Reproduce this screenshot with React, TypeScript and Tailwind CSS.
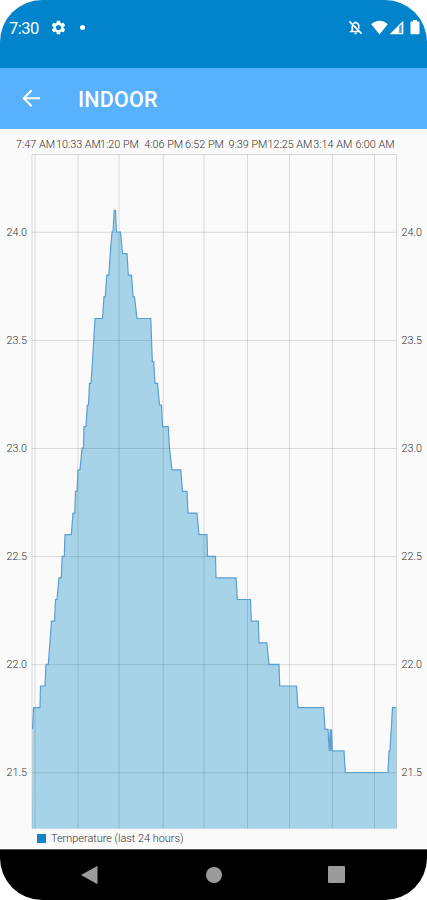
const PLOT = { left: 32, right: 396.5, top: 26.5, bottom: 700.7 };

const timeTicks = [
  { x: 35, label: '7:47 AM' },
  { x: 78, label: '10:33 AM' },
  { x: 119, label: '1:20 PM' },
  { x: 163.2, label: '4:06 PM' },
  { x: 204, label: '6:52 PM' },
  { x: 247.5, label: '9:39 PM' },
  { x: 289.5, label: '12:25 AM' },
  { x: 332.3, label: '3:14 AM' },
  { x: 374.5, label: '6:00 AM' },
];

const tempTicks = [24, 23.5, 23, 22.5, 22, 21.5];

// [x, temperature]
const readings: [number, number][] = [
  [32.5, 21.7], [33.5, 21.8], [40, 21.8], [40.5, 21.9], [45, 21.9], [46, 22], [48.3, 22],
  [51.5, 22.2], [54.5, 22.2], [55.5, 22.3], [57, 22.3], [59, 22.4], [61.3, 22.4],
  [62.2, 22.5], [64.3, 22.5], [65, 22.6], [71.3, 22.6], [73, 22.7], [74.8, 22.7],
  [75.5, 22.8], [77, 22.8], [78, 22.9], [80, 22.9], [82, 23], [83.5, 23],
  [84, 23.1], [86, 23.1], [87.3, 23.2], [88.5, 23.2], [89.5, 23.3], [91, 23.3],
  [92.5, 23.4], [95, 23.6], [102.5, 23.6], [104, 23.7], [105.3, 23.7], [106.8, 23.8],
  [108.8, 23.8], [110.3, 23.9], [112, 24], [113, 24], [114.2, 24.1], [115.5, 24.1],
  [116.5, 24], [120.5, 24], [122.5, 23.9], [127, 23.9], [128.3, 23.8], [131.5, 23.8],
  [133, 23.7], [134.5, 23.7], [137, 23.6], [150.8, 23.6], [152.3, 23.4], [153.7, 23.4],
  [155, 23.3], [157.5, 23.3], [159.5, 23.2], [161.5, 23.2], [162.5, 23.1], [168.3, 23.1],
  [169.5, 23], [172, 22.9], [180.8, 22.9], [182.5, 22.8], [187, 22.8], [188, 22.7],
  [197, 22.7], [199, 22.6], [207, 22.6], [207.5, 22.5], [215.5, 22.5], [216, 22.4],
  [236, 22.4], [237.3, 22.3], [250.5, 22.3], [251.3, 22.2], [258.3, 22.2], [259, 22.1],
  [266.8, 22.1], [269, 22], [279, 22], [279.7, 21.9], [296.5, 21.9], [298, 21.8],
  [323.7, 21.8], [325, 21.7], [328, 21.7], [329.3, 21.6], [330.2, 21.7], [330.8, 21.6],
  [331.5, 21.7], [332.3, 21.6], [344, 21.6], [345.3, 21.5], [388, 21.5], [389, 21.6],
  [390, 21.6], [392.5, 21.8], [396, 21.8],
];

const tempToY = (t: number) => 104 + (24 - t) * 216.2;

const line = readings.map(([x, t]) => `${x},${tempToY(t).toFixed(1)}`).join(' ');
const area = `${PLOT.left},${PLOT.bottom} ${line} ${PLOT.right},${tempToY(21.8)} ${PLOT.right},${PLOT.bottom}`;

function StatusBar() {
  return (
    <div className="flex h-[68px] items-start bg-[#0284cd] pt-[18px] text-white">
      <span className="ml-[9px] w-[31px] pt-px text-[16.5px] leading-5 tracking-[-0.5px]">7:30</span>
      <svg className="ml-[10px] mt-px h-[17px] w-[17px]" viewBox="0 0 24 24" fill="currentColor">
        <path d="M19.14 12.94c.04-.3.06-.61.06-.94 0-.32-.02-.64-.07-.94l2.03-1.58a.49.49 0 0 0 .12-.61l-1.92-3.32a.49.49 0 0 0-.59-.22l-2.39.96c-.5-.38-1.03-.7-1.62-.94l-.36-2.54a.48.48 0 0 0-.48-.41h-3.84a.47.47 0 0 0-.47.41l-.36 2.54c-.59.24-1.13.57-1.62.94l-2.39-.96a.48.48 0 0 0-.59.22L2.74 8.87c-.12.21-.08.47.12.61l2.03 1.58c-.05.3-.09.63-.09.94s.02.64.07.94l-2.03 1.58a.49.49 0 0 0-.12.61l1.92 3.32c.12.22.37.29.59.22l2.39-.96c.5.38 1.03.7 1.62.94l.36 2.54c.05.24.24.41.48.41h3.84c.24 0 .44-.17.47-.41l.36-2.54c.59-.24 1.13-.56 1.62-.94l2.39.96c.22.08.47 0 .59-.22l1.92-3.32a.48.48 0 0 0-.12-.61zM12 15.6a3.6 3.6 0 1 1 0-7.2 3.6 3.6 0 0 1 0 7.2z" />
      </svg>
      <span className="ml-[13px] mt-[7px] h-[5px] w-[5px] rounded-full bg-white" />

      {/* Muted bell */}
      <svg className="ml-auto mt-[2px] h-[15px] w-[15px]" viewBox="0 0 16 16" fill="none" stroke="currentColor" strokeWidth="1.7">
        <path d="M1.500 1.500l13 13M5.600 3.900C6.200 3.300 7 3 8 3c2.300 0 3.500 1.700 3.500 4v2.300M4.500 6v5L3.300 12.300h8.400M8 3V1.500" />
        <path d="M7 14.200h2.200" strokeWidth="1.800" />
      </svg>
      {/* Wifi */}
      <svg className="ml-[8px] mt-[2px] h-[15px] w-[17px]" viewBox="0 0 17 15" fill="currentColor">
        <path d="M8.500 14.500L.3 4.200C2.600 2 5.300.7 8.500.7s5.900 1.300 8.200 3.500z" />
      </svg>
      {/* Signal */}
      <svg className="ml-px mt-[2px] h-[15px] w-[15px]" viewBox="0 0 15 15">
        <path d="M14.300 .700v13.600H.700z" fill="#fff" />
        <path d="M10.200 6.400l2.600-2.600V12.900h-2.600z" fill="#0284cd" fillOpacity="0.75" />
      </svg>
      {/* Battery */}
      <svg className="ml-[6px] mr-[7px] mt-[2px] h-[15px] w-[10px]" viewBox="0 0 10 15" fill="currentColor">
        <path d="M3 0h4v1.500h1.700c.5 0 .8.300.8.800v11c0 .5-.3.900-.8.900H1.300c-.5 0-.8-.4-.8-.9v-11c0-.5.300-.8.800-.8H3z" />
      </svg>
    </div>
  );
}

function AppBar() {
  return (
    <header className="flex h-[61px] items-center bg-[#58b1fb] text-white">
      <button className="ml-[22px] h-[19px] w-[19px]" aria-label="Back">
        <svg className="h-full w-full" viewBox="0 0 19 19" fill="none" stroke="currentColor" strokeWidth="2">
          <path d="M18 9.200H2M9.700 1.200L1.700 9.200l8 8" />
        </svg>
      </button>
      <h1 className="ml-[37px] pt-[2px] text-[21.5px] font-medium leading-6 tracking-[0.2px]">INDOOR</h1>
    </header>
  );
}

function TemperatureChart() {
  return (
    <svg className="block h-[702px] w-full" viewBox="0 0 427 702" fontSize="10.8" fontWeight="300" fill="#333">
      {timeTicks.map((tick) => (
        <text key={tick.label} x={tick.x + 0.5} y="19.500" textAnchor="middle">
          {tick.label}
        </text>
      ))}

      <polygon points={area} fill="#a6d3e8" />

      {/* Grid */}
      <g stroke="#000" strokeOpacity="0.13" strokeWidth="1">
        {timeTicks.map((tick) => (
          <line key={tick.label} x1={tick.x} x2={tick.x} y1={PLOT.top} y2={PLOT.bottom} />
        ))}
        {tempTicks.map((t) => (
          <line key={t} x1={PLOT.left} x2={PLOT.right} y1={tempToY(t) + 0.3} y2={tempToY(t) + 0.3} />
        ))}
        <path d={`M${PLOT.left} ${PLOT.bottom}V${PLOT.top}H${PLOT.right}V${PLOT.bottom}`} fill="none" />
      </g>

      <polyline points={line} fill="none" stroke="#5b9fd2" strokeWidth="1.200" />

      {tempTicks.map((t) => (
        <g key={t}>
          <text x="27" y={tempToY(t) + 3.6} textAnchor="end">{t.toFixed(1)}</text>
          <text x="401.500" y={tempToY(t) + 3.6}>{t.toFixed(1)}</text>
        </g>
      ))}
    </svg>
  );
}

function NavigationBar() {
  return (
    <nav className="flex h-[51px] items-center border-t border-[#555] bg-black text-[#9b9b9b]">
      <svg className="ml-[81px] h-[19px] w-[17px]" viewBox="0 0 17 19" fill="currentColor">
        <path d="M0 9L16.500-.2v18.400z" />
      </svg>
      <span className="-mt-px ml-[108px] h-4 w-4 rounded-full bg-[#9b9b9b]" />
      <span className="-mt-px ml-[106px] h-[17px] w-[17px] rounded-[1px] bg-[#9b9b9b]" />
    </nav>
  );
}

export default function App() {
  return (
    <div className="h-[900px] w-[427px] overflow-hidden bg-white font-['Roboto',sans-serif]">
      <div className="flex h-full flex-col overflow-hidden rounded-[42px] bg-[#fafafa]">
        <StatusBar />
        <AppBar />
        {/* The plot's coordinates start one pixel above the content area */}
        <main className="-mt-px flex-1">
          <TemperatureChart />
          <div className="flex items-center pl-[37px] pt-px">
            <span className="h-[9px] w-[9px] bg-[#1a83c8]" />
            <span className="ml-[5px] pt-px text-[10.9px] font-light leading-[14px] text-[#333]">
              Temperature (last 24 hours)
            </span>
          </div>
        </main>
        <NavigationBar />
      </div>
    </div>
  );
}
